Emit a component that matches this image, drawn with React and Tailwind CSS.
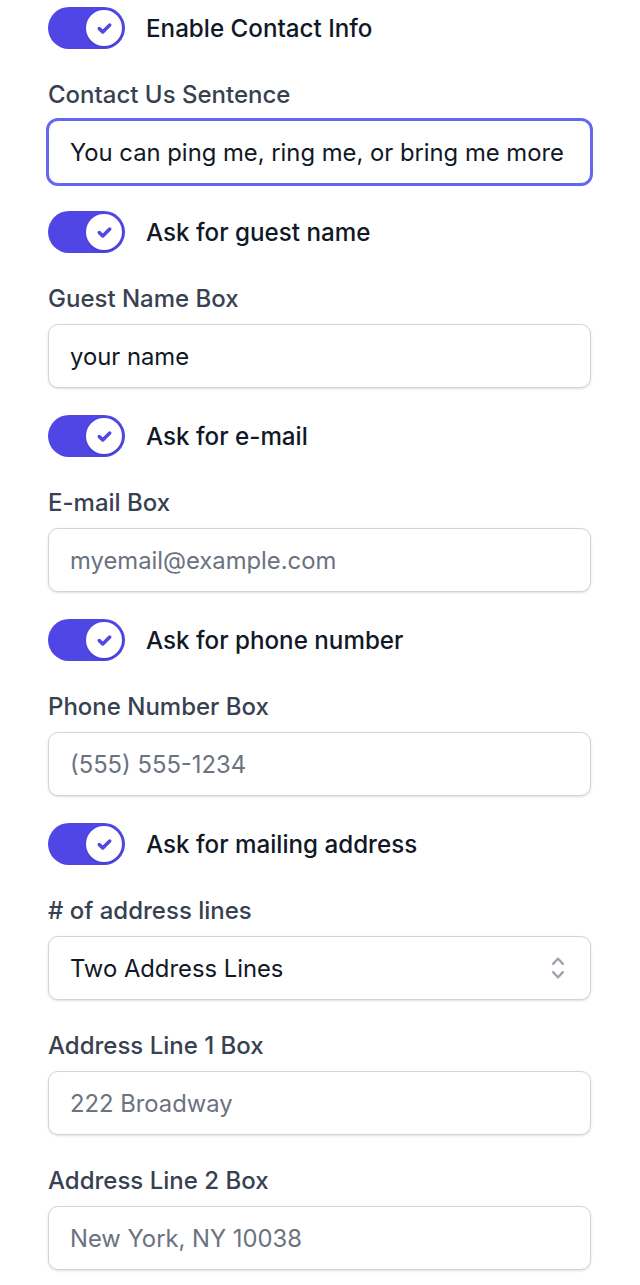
import React from "react";

const font = { fontFamily: "Inter, 'Noto Sans', sans-serif" };

function Toggle({ label }) {
  return (
    <div className="flex items-center">
      <div className="relative flex h-[42px] w-[77px] shrink-0 items-center rounded-full bg-[#4f46e5] px-[3px]">
        <div className="ml-auto flex h-[36px] w-[36px] items-center justify-center rounded-full bg-white shadow">
          <svg viewBox="0 0 12 12" className="h-[21px] w-[21px] text-[#4f46e5]" fill="currentColor">
            <path d="M3.707 5.293a1 1 0 00-1.414 1.414l1.414-1.414zM5 8l-.707.707a1 1 0 001.414 0L5 8zm4.707-3.293a1 1 0 00-1.414-1.414l1.414 1.414zm-7.414 2l2 2 1.414-1.414-2-2-1.414 1.414zm3.414 2l4-4-1.414-1.414-4 4 1.414 1.414z" />
          </svg>
        </div>
      </div>
      <span className="ml-[21px] text-[24.2px] font-medium leading-[35px] text-[#111827]">{label}</span>
    </div>
  );
}

function Field({ label, value, placeholder, focused }) {
  return (
    <div className="mt-[28px]">
      <div className="text-[24px] font-medium leading-[35px] text-[#374151]">{label}</div>
      <div
        className={
          "mt-[8px] flex h-[64px] items-center rounded-[10px] border bg-white px-[21px] shadow-sm " +
          (focused ? "border-[#6366f1] ring-2 ring-[#6366f1]" : "border-[#d1d5db]")
        }
      >
        {value ? (
          <span className="whitespace-nowrap text-[23.8px] leading-[35px] text-[#111827]">{value}</span>
        ) : (
          <span className="text-[23.8px] leading-[35px] text-[#6b7280]">{placeholder}</span>
        )}
      </div>
    </div>
  );
}

function SelectField({ label, value }) {
  return (
    <div className="mt-[28px]">
      <div className="text-[24px] font-medium leading-[35px] text-[#374151]">{label}</div>
      <div className="mt-[8px] flex h-[64px] items-center justify-between rounded-[10px] border border-[#d1d5db] bg-white pl-[21px] pr-[17px] shadow-sm">
        <span className="text-[23.8px] leading-[35px] text-[#111827]">{value}</span>
        <svg viewBox="0 0 20 20" className="h-[30px] w-[30px] text-[#9ca3af]" fill="currentColor">
          <path fillRule="evenodd" d="M10 3a.75.75 0 01.55.24l3.25 3.5a.75.75 0 11-1.1 1.02L10 4.852 7.3 7.76a.75.75 0 01-1.1-1.02l3.25-3.5A.75.75 0 0110 3zm-3.76 9.2a.75.75 0 011.06.04l2.7 2.908 2.7-2.908a.75.75 0 111.1 1.02l-3.25 3.5a.75.75 0 01-1.1 0l-3.25-3.5a.75.75 0 01.04-1.06z" clipRule="evenodd" />
        </svg>
      </div>
    </div>
  );
}

function Section({ children, first }) {
  return <div className={first ? "" : "mt-[27px]"}>{children}</div>;
}

export default function App() {
  return (
    <div style={font} className="min-h-[1285px] bg-white pl-[48px] pr-[49px] pt-[7px] antialiased">
      <Section first>
        <Toggle label="Enable Contact Info" />
        <Field label="Contact Us Sentence" value="You can ping me, ring me, or bring me more" focused />
      </Section>
      <Section>
        <Toggle label="Ask for guest name" />
        <Field label="Guest Name Box" value="your name" />
      </Section>
      <Section>
        <Toggle label="Ask for e-mail" />
        <Field label="E-mail Box" placeholder="myemail@example.com" />
      </Section>
      <Section>
        <Toggle label="Ask for phone number" />
        <Field label="Phone Number Box" placeholder="(555) 555-1234" />
      </Section>
      <Section>
        <Toggle label="Ask for mailing address" />
        <SelectField label="# of address lines" value="Two Address Lines" />
        <Field label="Address Line 1 Box" placeholder="222 Broadway" />
        <Field label="Address Line 2 Box" placeholder="New York, NY 10038" />
      </Section>
    </div>
  );
}
